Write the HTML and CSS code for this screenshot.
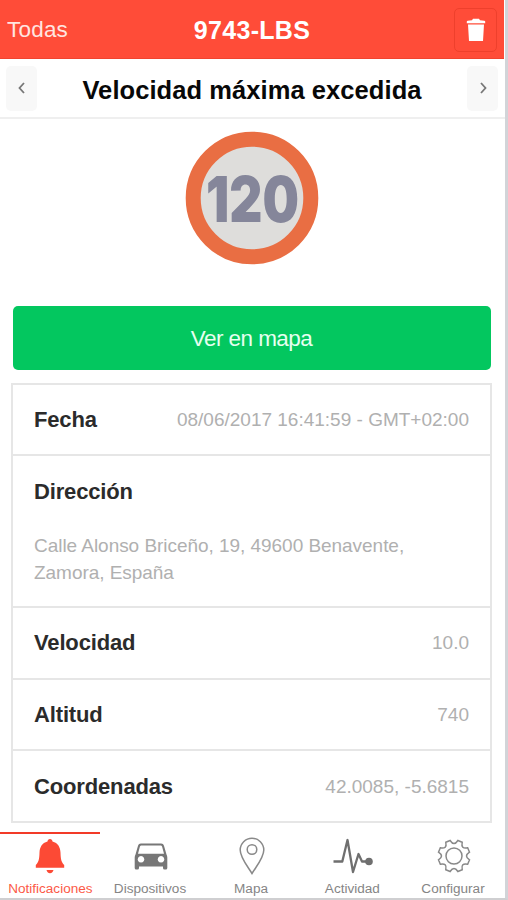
FILE: index.html
```html
<!DOCTYPE html>
<html lang="es">
<head>
<meta charset="utf-8">
<title>9743-LBS</title>
<link rel="stylesheet" href="styles.css">
</head>
<body>
<div class="app">
  <header class="topbar">
    <a class="back">Todas</a>
    <h1 class="device">9743-LBS</h1>
    <button class="trash" aria-label="Eliminar"><svg width="20" height="24" viewBox="0 0 20 24"><path fill="#fff" d="M.8 5.200V3.600Q.8 2.800 1.800 2.700L6 2.200 7 .8h6l1 1.400 4.200.5q1 .1 1 .9v1.600zM2 6.500h16L17 23H3z"/></svg></button>
  </header>
  <div class="pager">
    <button class="step" aria-label="Anterior"><svg width="10" height="14" viewBox="0 0 10 14"><path d="M7 2 2.500 7 7 12"/></svg></button>
    <h2 class="alert">Velocidad máxima excedida</h2>
    <button class="step" aria-label="Siguiente"><svg width="10" height="14" viewBox="0 0 10 14"><path d="M3 2 7.500 7 3 12"/></svg></button>
  </div>
  <main class="content">
    <svg class="sign" width="134" height="134" viewBox="0 0 134 134">
      <circle cx="67" cy="67" r="58.800" fill="#dedddb" stroke="#e96e43" stroke-width="15"/>
      <text class="limit" x="21" y="90.500" textLength="93" lengthAdjust="spacingAndGlyphs">120</text>
    </svg>
    <button class="map-button"><span>Ver en mapa</span></button>
    <dl class="details">
      <div class="row"><dt>Fecha</dt><dd>08/06/2017 16:41:59 - GMT+02:00</dd></div>
      <div class="row row-tall"><dt>Dirección</dt><dd class="address">Calle Alonso Briceño, 19, 49600 Benavente,<br>Zamora, España</dd></div>
      <div class="row"><dt>Velocidad</dt><dd>10.0</dd></div>
      <div class="row"><dt>Altitud</dt><dd>740</dd></div>
      <div class="row"><dt>Coordenadas</dt><dd>42.0085, -5.6815</dd></div>
    </dl>
  </main>
  <nav class="tabs">
    <a class="tab active"><svg width="40" height="40" viewBox="0 0 40 40"><path fill="#fc4a35" d="M20 2c1.500 0 2.400 1 2.500 2.600C28 6 30.300 10.500 30.500 15.500c.2 7 .8 9.500 3.700 12.500v2.800H5.800V28c2.900-3 3.500-5.500 3.700-12.500.2-5 2.500-9.500 8-10.900C17.600 3 18.500 2 20 2zM16.500 33h7c-.5 2-1.500 3.200-3.500 3.200s-3-1.200-3.500-3.200z"/></svg><span>Notificaciones</span></a>
    <a class="tab"><svg width="40" height="40" viewBox="0 0 40 40"><path fill="#777" fill-rule="evenodd" d="M10 6.500h20c2 0 2.700 1 3.200 3l2.300 8c.5 1 .8 2 .8 3V31q0 1.500-1.500 1.500h-1.300Q32 32.500 32 31v-1.500H8V31q0 1.500-1.500 1.500H5.200q-1.500 0-1.500-1.500V20.500c0-1 .3-2 .8-3l2.300-8c.5-2 1.200-3 3.200-3zM10.500 8.500c-1 0-1.400.5-1.700 1.500L7 16.800h26L31.200 10c-.3-1-.7-1.500-1.700-1.500zM10 19a3.300 3.300 0 1 0 .01 0zM30 19a3.300 3.300 0 1 0 .01 0z"/></svg><span>Dispositivos</span></a>
    <a class="tab"><svg width="40" height="40" viewBox="0 0 40 40" class="thin"><path d="M20 36.500C15 28.500 8.200 20.500 8.200 13a11.800 11.800 0 0 1 23.600 0C31.800 20.500 25 28.500 20 36.500z"/><circle cx="20" cy="12.500" r="4.800"/></svg><span>Mapa</span></a>
    <a class="tab"><svg width="42" height="40" viewBox="0 0 42 40" class="pulse"><path d="M1.500 24.500h8.800L15.500 3 21 35l5.500-18 3.500 7.500h7"/><circle cx="37" cy="24.500" r="3.800"/></svg><span>Actividad</span></a>
    <a class="tab"><svg width="40" height="40" viewBox="-20 -19 40 40" class="thin"><path d="M-3.900-15.500Q0-9.500 3.900-15.500L8.200-13.700Q6.700-6.700 13.700-8.200L15.500-3.900Q9.500 0 15.500 3.900L13.700 8.200Q6.700 6.700 8.200 13.700L3.900 15.500Q0 9.500-3.900 15.500L-8.200 13.700Q-6.700 6.700-13.700 8.200L-15.500 3.900Q-9.500 0-15.500-3.900L-13.700-8.200Q-6.700-6.700-8.200-13.700z"/><circle r="8"/></svg><span>Configurar</span></a>
  </nav>
</div>
</body>
</html>
```
FILE: styles.css
```css
* { box-sizing: border-box; }
body {
  margin: 0;
  background: #fff;
  font-family: "Liberation Sans", Arial, sans-serif;
}
h1, h2, dl, dt, dd { margin: 0; }
button { font: inherit; border: 0; padding: 0; }
.app {
  width: 508px;
  height: 900px;
  display: flex;
  flex-direction: column;
  border-right: 3px solid #d2d4d8;
  border-bottom: 2px solid #cfcfd1;
  overflow: hidden;
}
.topbar {
  height: 59px;
  flex: none;
  display: grid;
  grid-template-columns: 100px 1fr 100px;
  align-items: center;
  padding: 2px 7px 0;
  margin-right: 1px;
  background: #ff4c38;
  color: #fff;
  border-bottom: 1px solid #f0442f;
}
.back { font-size: 22.5px; color: #ffe5e0; letter-spacing: .2px; }
.device { font-size: 25px; text-align: center; letter-spacing: .3px; padding-top: 1px; }
.trash {
  justify-self: end;
  width: 43px;
  height: 44px;
  display: grid;
  place-items: center;
  background: transparent;
  border: 1px solid #ee402c;
  border-radius: 5px;
}
.pager {
  height: 60px;
  flex: none;
  display: flex;
  align-items: center;
  justify-content: space-between;
  padding: 0 7px 0 6px;
  border-bottom: 2px solid #efefef;
}
.step {
  width: 31px;
  height: 45px;
  display: grid;
  place-items: center;
  background: #f8f8f8;
  border-radius: 5px;
}
.step path { fill: none; stroke: #777; stroke-width: 1.8; }
.alert {
  font-size: 25.5px;
  letter-spacing: .07px;
  padding-top: 4px;
  white-space: nowrap;
  color: #080808;
}
.content {
  flex: 1;
  display: flex;
  flex-direction: column;
  align-items: center;
  padding: 12px 2px 0 0;
}
.sign { flex: none; }
.limit {
  font-family: Inter, sans-serif;
  font-weight: 900;
  font-size: 63px;
  fill: #85869a;
}
.map-button {
  width: 478px;
  height: 64px;
  flex: none;
  margin: 41px 0 13px;
  padding-top: 2px;
  border-radius: 5px;
  background: #03c75f;
  color: #e6fff0;
  font-size: 22.500px;
  letter-spacing: -.55px;
}
.details { width: 481px; border: 2px solid #e6e6e6; }
.row {
  height: 71.500px;
  display: flex;
  align-items: center;
  justify-content: space-between;
  padding: 1px 21px 0;
  border-bottom: 2px solid #e6e6e6;
}
.row:first-child { height: 71px; }
.row:last-child { height: 70px; border-bottom: 0; }
.row dt { font-size: 22px; letter-spacing: -.15px; font-weight: bold; color: #2b2b2b; }
.row dd { font-size: 19px; color: #b0b0b0; white-space: nowrap; }
.row-tall {
  height: 152px;
  flex-direction: column;
  align-items: flex-start;
  justify-content: flex-start;
  padding-top: 23px;
}
.row .address { margin-top: 27px; line-height: 27px; letter-spacing: -.04px; }
.tabs {
  height: 66px;
  flex: none;
  display: grid;
  grid-template-columns: 100px repeat(4, 101px);
}
.tab {
  display: flex;
  flex-direction: column;
  align-items: center;
  padding-top: 3px;
  border-top: 2px solid transparent;
  color: #858585;
  font-size: 12px;
}
.tab svg { flex: none; }
.tab span {
  line-height: 15px;
  margin-top: 5px;
  white-space: nowrap;
  transform: scaleX(1.13);
}
.tab.active { color: #fc5a47; border-color: #f23a28; }
.thin { fill: none; stroke: #898989; stroke-width: 1.5; }
.pulse { fill: none; stroke: #6f6f6f; stroke-width: 2.3; stroke-linejoin: round; }
.pulse circle { fill: #6f6f6f; stroke: none; }
```
